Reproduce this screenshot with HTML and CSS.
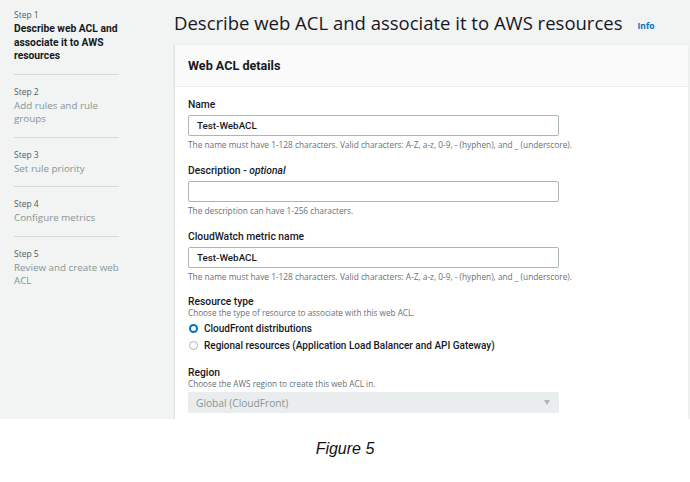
FILE: index.html
```html
<!DOCTYPE html>
<html>
<head>
<meta charset="utf-8">
<link rel="stylesheet" href="styles.css">
</head>
<body>
<div class="shot">
  <nav class="steps">
    <div class="step step-first">
      <div class="step-num">Step 1</div>
      <div class="step-title active">Describe web ACL and associate it to AWS resources</div>
    </div>
    <div class="step">
      <div class="step-num">Step 2</div>
      <div class="step-title">Add rules and rule groups</div>
    </div>
    <div class="step">
      <div class="step-num">Step 3</div>
      <div class="step-title">Set rule priority</div>
    </div>
    <div class="step">
      <div class="step-num">Step 4</div>
      <div class="step-title">Configure metrics</div>
    </div>
    <div class="step step-last">
      <div class="step-num">Step 5</div>
      <div class="step-title">Review and create web ACL</div>
    </div>
  </nav>
  <main class="main">
    <div class="page-head">
      <h1 class="page-title">Describe web ACL and associate it to AWS resources</h1>
      <a class="info">Info</a>
    </div>
    <section class="panel">
      <div class="panel-head">Web ACL details</div>
      <div class="panel-body">
        <div class="field">
          <div class="label">Name</div>
          <div class="input">Test-WebACL</div>
          <div class="hint">The name must have 1-128 characters. Valid characters: A-Z, a-z, 0-9, - (hyphen), and _ (underscore).</div>
        </div>
        <div class="field">
          <div class="label">Description - <i>optional</i></div>
          <div class="input"></div>
          <div class="hint">The description can have 1-256 characters.</div>
        </div>
        <div class="field field-last-text">
          <div class="label">CloudWatch metric name</div>
          <div class="input">Test-WebACL</div>
          <div class="hint">The name must have 1-128 characters. Valid characters: A-Z, a-z, 0-9, - (hyphen), and _ (underscore).</div>
        </div>
        <div class="field field-radio">
          <div class="label label-tight">Resource type</div>
          <div class="desc">Choose the type of resource to associate with this web ACL.</div>
          <div class="radios">
            <div class="radio"><span class="dot on"></span>CloudFront distributions</div>
            <div class="radio"><span class="dot"></span>Regional resources (Application Load Balancer and API Gateway)</div>
          </div>
        </div>
        <div class="field field-region">
          <div class="label label-tight">Region</div>
          <div class="desc">Choose the AWS region to create this web ACL in.</div>
          <div class="select"><span>Global (CloudFront)</span><span class="caret"></span></div>
        </div>
      </div>
    </section>
  </main>
</div>
<p class="caption">Figure 5</p>
</body>
</html>
```
FILE: styles.css
```css
* { box-sizing: border-box; }
body {
  margin: 0;
  background: #ffffff;
  font-family: "Open Sans", "Noto Sans", sans-serif;
  color: #16191f;
}
.shot {
  display: grid;
  grid-template-columns: 174px 514px;
  height: 419px;
  overflow: hidden;
  background: #f2f3f3;
  width: 690px;
}
.steps {
  padding-left: 14px;
}
.step {
  width: 105px;
  padding: 10px 0 11px;
  border-bottom: 1px solid #d5dbdb;
}
.step-first { padding-top: 8px; }
.step-last { border-bottom: none; }
.step-num {
  font-size: 8.5px;
  line-height: 14px;
  color: #545b64;
}
.step-title {
  width: 112px;
  font-size: 9.8px;
  line-height: 13.5px;
  color: #879596;
}
.step-title.active {
  color: #16191f;
  font-family: Roboto, sans-serif;
  font-size: 10.3px;
  font-weight: 700;
}
.main {
  display: flex;
  flex-direction: column;
}
.page-head {
  height: 45px;
  display: flex;
  align-items: center;
  gap: 15px;
}
.page-title {
  margin: 0;
  font-size: 18.5px;
  font-weight: 400;
  color: #16191f;
}
.info {
  font-size: 8.5px;
  font-weight: 700;
  color: #0073bb;
  margin-top: 5px;
}
.panel {
  flex: 1;
  background: #ffffff;
  border-left: 1px solid #e1e4e4;
  box-shadow: 0 0 1px #d5dbdb;
}
.panel-head {
  height: 42px;
  background: #fafafa;
  border-bottom: 1px solid #eaeded;
  display: flex;
  align-items: center;
  padding-left: 13px;
  font-family: Roboto, sans-serif;
  font-size: 12.6px;
  font-weight: 700;
}
.panel-body {
  padding: 11px 0 0 13px;
}
.field {
  margin-bottom: 13px;
}
.field-last-text { margin-bottom: 12px; }
.label {
  font-family: Roboto, sans-serif;
  font-size: 10.3px;
  line-height: 14px;
  font-weight: 500;
}
.label-tight { line-height: 13px; }
.label i { font-weight: 500; }
.input {
  width: 371px;
  height: 21px;
  margin-top: 3px;
  border: 1px solid #aab7b8;
  border-radius: 2px;
  padding: 0 8px;
  font-family: Roboto, sans-serif;
  font-size: 9.8px;
  font-weight: 500;
  line-height: 19px;
  background: #fff;
}
.hint {
  margin-top: 3px;
  font-size: 8.3px;
  line-height: 12px;
  color: #687078;
}
.desc {
  font-size: 8.2px;
  line-height: 9px;
  color: #687078;
}
.field-radio { margin-bottom: 12px; }
.radios { margin-top: 3px; }
.radio {
  display: flex;
  align-items: center;
  gap: 6px;
  font-family: Roboto, sans-serif;
  font-size: 10px;
  font-weight: 500;
  line-height: 17px;
  margin-left: 1px;
}
.dot {
  width: 9px;
  height: 9px;
  border-radius: 50%;
  border: 1px solid #aab7b8;
  background: #fff;
}
.dot.on {
  border: 2.5px solid #0073bb;
}
.select {
  margin-top: 4px;
  width: 371px;
  height: 21px;
  background: #eaeded;
  border-radius: 2px;
  display: flex;
  align-items: center;
  justify-content: space-between;
  padding: 0 9px 0 8px;
  font-size: 10.2px;
  font-weight: 400;
  color: #879596;
}
.caret {
  width: 0;
  height: 0;
  border-left: 3.5px solid transparent;
  border-right: 3.5px solid transparent;
  border-top: 5px solid #aab7b8;
}
.caption {
  margin: 21px 0 0;
  text-align: center;
  font-family: "Liberation Sans", Arial, sans-serif;
  font-style: italic;
  font-size: 16px;
  color: #111;
}
```
